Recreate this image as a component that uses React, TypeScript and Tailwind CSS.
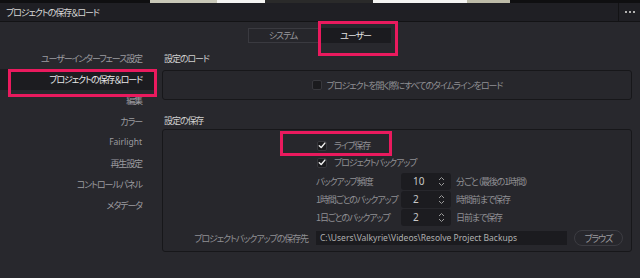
import React from "react";

const font = "font-['Noto_Sans_CJK_JP','Noto_Sans',sans-serif] [font-feature-settings:'palt']";

function Check({ checked }: { checked?: boolean }) {
  return (
    <div className="w-[10px] h-[10px] rounded-[2px] bg-[#1b1b1e] border border-[#38383d] flex items-center justify-center shrink-0">
      {checked && (
        <svg width="9" height="9" viewBox="0 0 10 10">
          <path d="M1.6 5.2 L4 7.6 L8.6 2" stroke="#f0f0f0" strokeWidth="1.8" fill="none" strokeLinecap="round" strokeLinejoin="round" />
        </svg>
      )}
    </div>
  );
}

function Spin({ value }: { value: string }) {
  return (
    <div className="w-[50px] h-[17px] rounded-[3px] bg-[#1c1c20] flex items-center pl-[12px] pr-[6px] justify-between shrink-0">
      <span className="text-[10px] tracking-normal text-[#c8c8c8] font-['Noto_Sans',sans-serif]">{value}</span>
      <svg width="7" height="11" viewBox="0 0 7 11">
        <path d="M1 4 L3.5 1.5 L6 4 M1 7 L3.5 9.5 L6 7" stroke="#9a9a9a" strokeWidth="1" fill="none" />
      </svg>
    </div>
  );
}

function NumRow({ label, value, suffix }: { label: string; value: string; suffix: string }) {
  return (
    <div className="h-[18px] flex items-center">
      <div className="w-[85px] text-[#909094] whitespace-nowrap">{label}</div>
      <Spin value={value} />
      <div className="ml-[5px] text-[#909094] whitespace-nowrap">{suffix}</div>
    </div>
  );
}

export default function App() {
  const side = [
    "ユーザーインターフェース設定",
    "プロジェクトの保存＆ロード",
    "編集",
    "カラー",
    "Fairlight",
    "再生設定",
    "コントロールパネル",
    "メタデータ",
  ];
  return (
    <div className={`w-[640px] h-[278px] bg-[#28282d] relative overflow-hidden flex flex-col text-[9px] tracking-[-1.1px] leading-none ${font}`}>
      {/* top strip */}
      <div className="h-[3px] bg-[#0f0f11] flex shrink-0">
        <div className="w-[150px]" />
        <div className="w-[67px] bg-[#c9c8b8]" />
        <div className="w-[48px] bg-[#f4f4f2]" />
        <div className="w-[108px] bg-[#2a2a2a]" />
        <div className="w-[94px] bg-[#f4f4f2]" />
        <div className="w-[43px] bg-[#bdbba8]" />
      </div>
      {/* title bar */}
      <div className="h-[19px] bg-[#1f1f24] border-b border-[#131315] flex items-center shrink-0">
        <div className="flex-1 pl-[6px] text-[#d8d8d8]">プロジェクトの保存＆ロード</div>
        <div className="w-[22px] h-full border-l border-[#131315] flex items-center justify-center gap-[2px]">
          <div className="w-[2px] h-[2px] bg-[#b0b0b0]" />
          <div className="w-[2px] h-[2px] bg-[#b0b0b0]" />
          <div className="w-[2px] h-[2px] bg-[#b0b0b0]" />
        </div>
      </div>
      {/* tabs */}
      <div className="mt-[6px] flex justify-center gap-[2px] pr-[2px] shrink-0">
        <div className="w-[71px] h-[15px] border border-[#3a3a40] bg-[#26262b] text-[#9a9a9e] flex items-center justify-center">システム</div>
        <div className="w-[70px] h-[15px] bg-[#1b1b1f] text-[#e2e2e2] flex items-center justify-center">ユーザー</div>
      </div>
      {/* body */}
      <div className="flex flex-1 mt-[5px]">
        <div className="w-[155px] flex flex-col shrink-0">
          {side.map((s, i) => (
            <div
              key={s}
              className={`h-[21px] flex items-center justify-end pr-[13px] whitespace-nowrap ${i === 1 ? "bg-[#1c1c20] text-[#e8e8e8] h-[20px]" : "text-[#9c9ca0]"} ${i === 4 ? "font-['Noto_Sans',sans-serif] tracking-normal text-[8.5px]" : ""}`}
            >
              {s}
            </div>
          ))}
        </div>
        <div className="flex-1 ml-[7px] mr-[8px] flex flex-col">
          <div className="h-[20px] flex items-center pl-[2px] text-[#d0d0d0]">設定のロード</div>
          <div className="mt-[2px] h-[30px] rounded-[3px] border border-[#17171a] bg-[#27272c] flex items-center justify-center pl-[20px]">
            <div className="flex items-center gap-[5px]">
              <Check />
              <span className="text-[#909094]">プロジェクトを開く際にすべてのタイムラインをロード</span>
            </div>
          </div>
          <div className="mt-[11px] h-[18px] flex items-center pl-[2px] text-[#d0d0d0]">設定の保存</div>
          <div className="h-[123px] rounded-[3px] border border-[#17171a] bg-[#27272c] flex flex-col pt-[7px]">
            <div className="h-[17px] flex items-center pl-[154px] gap-[7px]">
              <Check checked />
              <span className="text-[#909094]">ライブ保存</span>
            </div>
            <div className="h-[17px] flex items-center pl-[154px] gap-[7px]">
              <Check checked />
              <span className="text-[#909094]">プロジェクトバックアップ</span>
            </div>
            <div className="pl-[153px] mt-[1px] flex flex-col">
              <NumRow label="バックアップ頻度" value="10" suffix="分ごと（最後の1時間）" />
              <NumRow label="1時間ごとのバックアップ" value="2" suffix="時間前まで保存" />
              <NumRow label="1日ごとのバックアップ" value="2" suffix="日前まで保存" />
            </div>
            <div className="mt-[4px] h-[16px] flex items-center">
              <div className="w-[145px] text-right text-[#909094] whitespace-nowrap">プロジェクトバックアップの保存先</div>
              <div className="ml-[8px] w-[251px] h-[14px] bg-[#1b1b1f] flex items-center pl-[4px] text-[#b0b0b0] text-[8.5px] tracking-normal font-['Noto_Sans',sans-serif] whitespace-nowrap">
                C:\Users\Valkyrie\Videos\Resolve Project Backups
              </div>
              <div className="ml-[7px] w-[49px] h-[16px] rounded-full border border-[#3c3c42] flex items-center justify-center text-[#9a9a9e]">ブラウズ</div>
            </div>
          </div>
        </div>
      </div>
      {/* annotation boxes */}
      <div className="absolute left-[318px] top-[21px] w-[80px] h-[35px] border-[3px] border-[#ea1a5e]" />
      <div className="absolute left-[8px] top-[69px] w-[149px] h-[28px] border-[3px] border-[#ea1a5e]" />
      <div className="absolute left-[280px] top-[131px] w-[112px] h-[25px] border-[3px] border-[#ea1a5e]" />
    </div>
  );
}
